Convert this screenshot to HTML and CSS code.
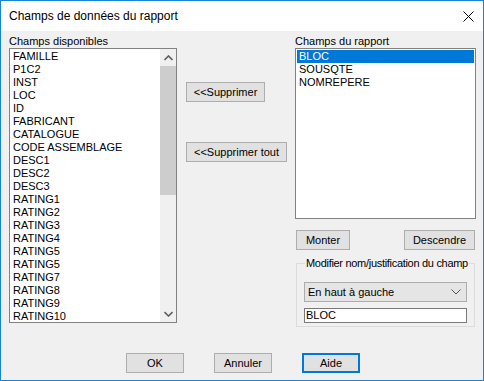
FILE: index.html
```html
<!DOCTYPE html>
<html lang="fr">
<head>
    <meta charset="UTF-8">
    <title>Champs de données du rapport</title>
    <link rel="stylesheet" href="styles.css">
</head>
<body>
    <div class="window">
        <div class="titlebar">
            <span class="title">Champs de données du rapport</span>
            <svg class="close" width="11" height="11" viewBox="0 0 11 11">
                <path d="M0.5 0.5 L10.5 10.5 M10.5 0.5 L0.5 10.5" stroke="#000" stroke-width="1"/>
            </svg>
        </div>
        <div class="content">
            <div class="col-left">
                <div class="label">Champs disponibles</div>
                <div class="listbox list-left">
                    <div class="items">
                        <div class="item">FAMILLE</div>
                        <div class="item">P1C2</div>
                        <div class="item">INST</div>
                        <div class="item">LOC</div>
                        <div class="item">ID</div>
                        <div class="item">FABRICANT</div>
                        <div class="item">CATALOGUE</div>
                        <div class="item">CODE ASSEMBLAGE</div>
                        <div class="item">DESC1</div>
                        <div class="item">DESC2</div>
                        <div class="item">DESC3</div>
                        <div class="item">RATING1</div>
                        <div class="item">RATING2</div>
                        <div class="item">RATING3</div>
                        <div class="item">RATING4</div>
                        <div class="item">RATING5</div>
                        <div class="item">RATING5</div>
                        <div class="item">RATING7</div>
                        <div class="item">RATING8</div>
                        <div class="item">RATING9</div>
                        <div class="item">RATING10</div>
                    </div>
                    <div class="scrollbar">
                        <div class="arrow">
                            <svg width="9" height="6" viewBox="0 0 9 6"><path d="M0.5 5 L4.5 1 L8.5 5" fill="none" stroke="#606060" stroke-width="1.6"/></svg>
                        </div>
                        <div class="track">
                            <div class="thumb"></div>
                        </div>
                        <div class="arrow">
                            <svg width="9" height="6" viewBox="0 0 9 6"><path d="M0.5 1 L4.5 5 L8.5 1" fill="none" stroke="#606060" stroke-width="1.6"/></svg>
                        </div>
                    </div>
                </div>
            </div>
            <div class="col-mid">
                <button class="btn btn-remove">&lt;&lt;Supprimer</button>
                <button class="btn btn-remove-all">&lt;&lt;Supprimer tout</button>
            </div>
            <div class="col-right">
                <div class="label">Champs du rapport</div>
                <div class="listbox list-right">
                    <div class="items">
                        <div class="item selected">BLOC</div>
                        <div class="item">SOUSQTE</div>
                        <div class="item">NOMREPERE</div>
                    </div>
                </div>
                <div class="move-row">
                    <button class="btn btn-up">Monter</button>
                    <button class="btn btn-down">Descendre</button>
                </div>
                <fieldset class="group">
                    <legend>Modifier nom/justification du champ</legend>
                    <div class="combo">
                        <span>En haut à gauche</span>
                        <svg width="10" height="6" viewBox="0 0 10 6"><path d="M0.5 0.5 L5 5 L9.5 0.5" fill="none" stroke="#555" stroke-width="1"/></svg>
                    </div>
                    <div class="textbox">BLOC</div>
                </fieldset>
            </div>
        </div>
        <div class="footer">
            <button class="btn btn-foot">OK</button>
            <button class="btn btn-foot">Annuler</button>
            <button class="btn btn-foot btn-default">Aide</button>
        </div>
    </div>
</body>
</html>
```

FILE: styles.css
```css
body {
    margin: 0;
    padding: 0;
    background: #fff;
}
.window {
    width: 484px;
    height: 381px;
    box-sizing: border-box;
    border: 1px solid #1883d7;
    background: #f0f0f0;
    display: flex;
    flex-direction: column;
    font-family: "Liberation Sans", Arial, sans-serif;
    font-size: 11px;
    color: #000;
}
.titlebar {
    height: 30px;
    background: #fff;
    display: flex;
    align-items: center;
    justify-content: space-between;
    padding: 0 9px 0 8px;
    flex-shrink: 0;
}
.title {
    font-size: 12px;
}
.close {
    display: block;
}
.content {
    display: flex;
    padding: 4px 7px 0 8px;
    height: 300px;
}
.label {
    height: 13px;
    line-height: 13px;
}
.col-left {
    width: 168px;
}
.listbox {
    box-sizing: border-box;
    border: 1px solid #828282;
    background: #fff;
    display: flex;
}
.list-left {
    height: 275px;
}
.items {
    flex: 1;
    padding: 1px;
    overflow: hidden;
}
.item {
    height: 13px;
    line-height: 13px;
    padding-left: 2px;
    white-space: nowrap;
}
.item.selected {
    background: #0078d7;
    color: #fff;
}
.scrollbar {
    width: 16px;
    background: #f0f0f0;
    display: flex;
    flex-direction: column;
}
.arrow {
    height: 17px;
    display: flex;
    align-items: center;
    justify-content: center;
}
.track {
    flex: 1;
}
.thumb {
    height: 129px;
    background: #cdcdcd;
}
.col-mid {
    width: 109px;
    margin-left: 9px;
    display: flex;
    flex-direction: column;
    align-items: flex-start;
}
.btn {
    box-sizing: border-box;
    height: 20px;
    padding: 0;
    background: #e1e1e1;
    border: 1px solid #adadad;
    font-family: "Liberation Sans", Arial, sans-serif;
    font-size: 11px;
    color: #000;
}
.btn-remove {
    width: 79px;
    margin-top: 47px;
}
.btn-remove-all {
    width: 101px;
    margin-top: 40px;
}
.col-right {
    width: 181px;
}
.list-right {
    height: 171px;
}
.move-row {
    display: flex;
    justify-content: space-between;
    margin: 11px 1px 0 1px;
}
.btn-up {
    width: 54px;
}
.btn-down {
    width: 71px;
}
.group {
    min-width: 0;
    margin: 7px 1px 0 1px;
    padding: 12px 7px 3px 7px;
    border: 1px solid #dcdcdc;
}
.group legend {
    padding: 0 1px;
    margin-left: 1px;
    line-height: 13px;
    white-space: nowrap;
    letter-spacing: -0.3px;
}
.combo {
    box-sizing: border-box;
    height: 20px;
    background: #e5e5e5;
    border: 1px solid #acacac;
    display: flex;
    align-items: center;
    justify-content: space-between;
    padding: 0 5px 0 3px;
}
.textbox {
    box-sizing: border-box;
    height: 15px;
    margin-top: 6px;
    background: #fff;
    border: 1px solid #7a7a7a;
    line-height: 13px;
    padding-left: 1px;
}
.footer {
    display: flex;
    gap: 30px;
    padding: 18px 0 0 125px;
}
.btn-foot {
    width: 58px;
}
.btn-default {
    border: 2px solid #0078d7;
}
```
